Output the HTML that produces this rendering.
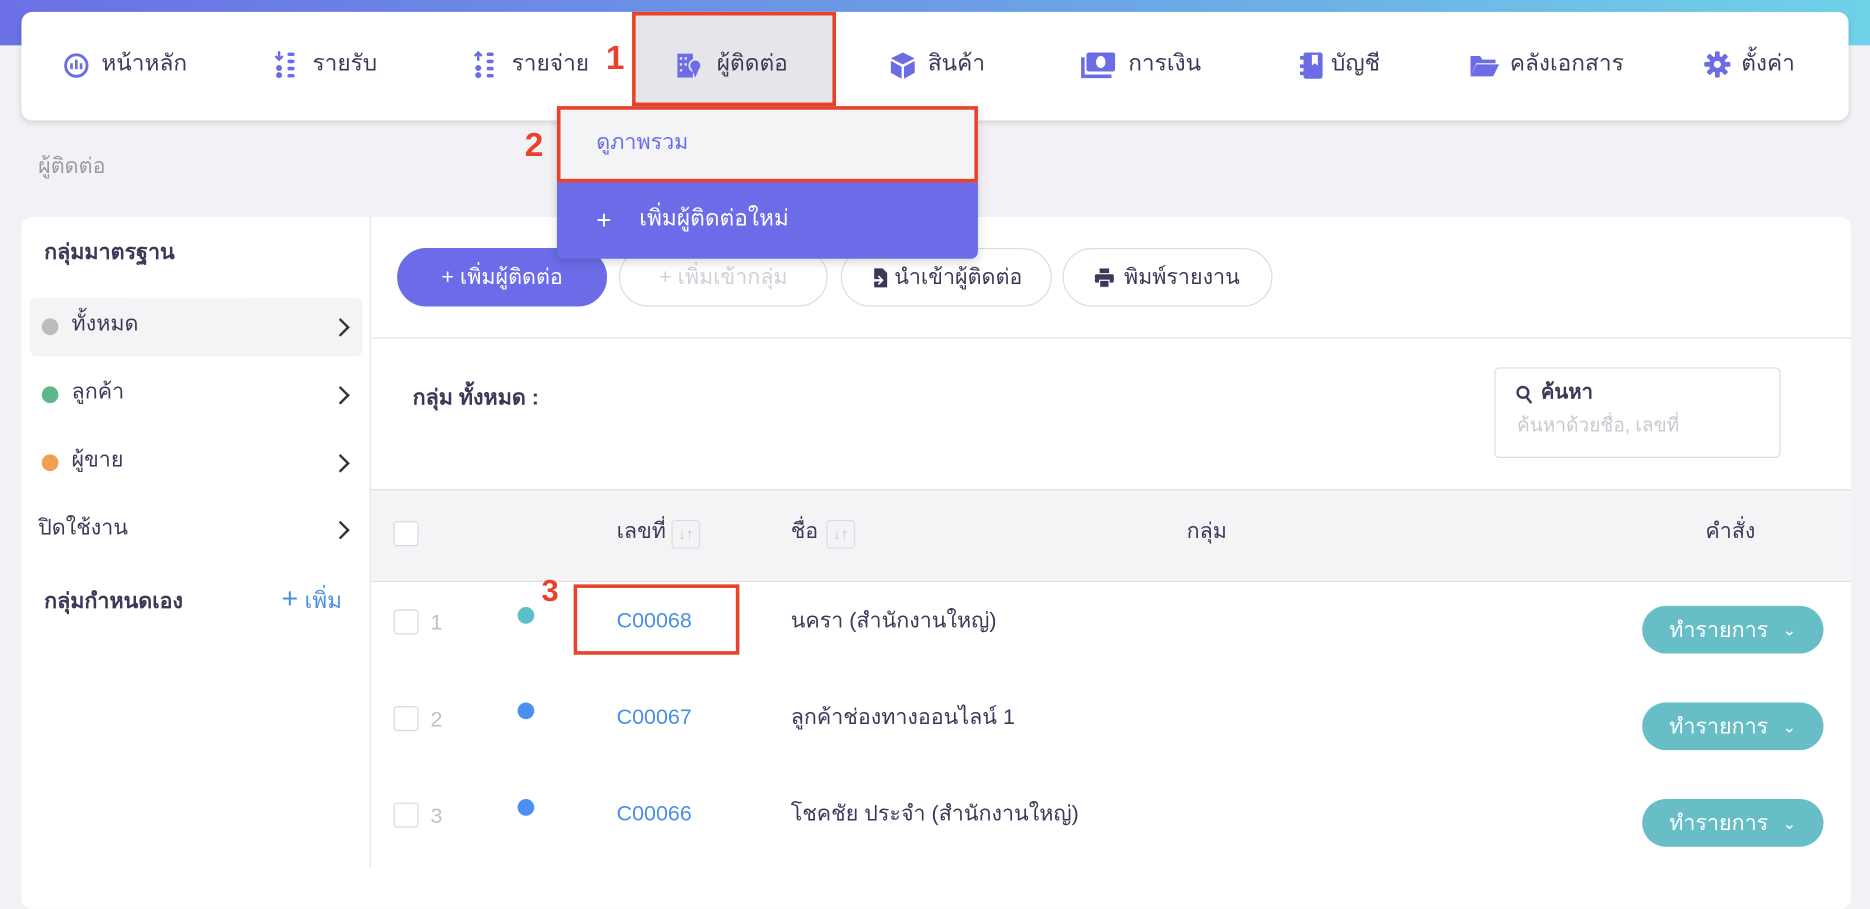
<!DOCTYPE html>
<html><head><meta charset="utf-8">
<style>
*{box-sizing:border-box;margin:0;padding:0}
html,body{width:1870px;height:868px;overflow:hidden;background:#f2f2f6}
#s{position:absolute;left:0;top:0;width:1568px;height:728px;transform:scale(1.19260);transform-origin:0 0;font-family:"Liberation Sans","Noto Sans CJK SC",sans-serif;color:#3a3a58;font-size:18px;line-height:1.05}
.a{position:absolute;white-space:nowrap}
.grad{left:0;top:0;width:1568px;height:38px;background:linear-gradient(90deg,#6b70e6,#6ca6e6 60%,#6fd2e8)}
.nav{left:18px;top:10px;width:1532px;height:91px;background:#fff;border-radius:9px;box-shadow:0 2px 5px rgba(0,0,0,.12)}
.ni{top:44px;font-size:19px;color:#3a3a58}
.ic{position:absolute}
.red{color:#e8432a;font-weight:bold;font-size:28px}
.card{left:18px;top:182px;width:1534px;height:580px;background:#fff;border-radius:9px}
.dot{position:absolute;width:14px;height:14px;border-radius:50%}
.chev{position:absolute;width:11px;height:11px;border-right:2px solid #333;border-top:2px solid #333;transform:rotate(45deg)}
.btn{position:absolute;top:208px;height:49px;border-radius:25px;border:1px solid #dcdce4;font-size:18px;display:flex;align-items:center;justify-content:center;background:#fff}
.cb{position:absolute;width:21px;height:21px;border:1px solid #d8d8e0;border-radius:3px;background:#fff}
.tb{position:absolute;left:1377px;width:152px;height:40px;border-radius:20px;background:#67bec6;color:#fff;font-size:18px;display:flex;align-items:center;justify-content:center;gap:12px}
.srt{position:absolute;width:24px;height:24px;border:1px solid #dcdce4;border-radius:3px;color:#c8c8d0;font-size:13px;text-align:center;line-height:22px;font-weight:bold}
</style></head><body><div id="s">
<div class="a grad"></div>
<div class="a nav"></div>
<div class="a" style="left:530px;top:10px;width:171px;height:79px;background:#e6e6ea;border:3px solid #e8432a"></div>
<svg class="ic" style="left:53px;top:44px" width="22" height="22" viewBox="0 0 22 22"><circle cx="11" cy="11" r="9" fill="none" stroke="#6c6ce6" stroke-width="2.4"/><path d="M7 9v5M11 6v8M15 9v5" stroke="#6c6ce6" stroke-width="2.2"/></svg>
<div class="a ni" style="left:85px">หน้าหลัก</div>
<svg class="ic" style="left:230px;top:42px" width="20" height="24" viewBox="0 0 20 24"><path d="M4 1v7M1 5l3 3 3-3" stroke="#6c6ce6" stroke-width="2" fill="none"/><circle cx="4" cy="15" r="2.5" fill="#6c6ce6"/><circle cx="4" cy="21" r="2.5" fill="#6c6ce6"/><g fill="#6c6ce6"><rect x="11" y="2" width="6" height="3" rx="1.5"/><rect x="11" y="8" width="6" height="3" rx="1.5"/><rect x="11" y="14" width="6" height="3" rx="1.5"/><rect x="11" y="20" width="6" height="3" rx="1.5"/></g></svg>
<div class="a ni" style="left:262px">รายรับ</div>
<svg class="ic" style="left:397px;top:42px" width="20" height="24" viewBox="0 0 20 24"><path d="M4 9V2M1 5l3-3 3 3" stroke="#6c6ce6" stroke-width="2" fill="none"/><circle cx="4" cy="15" r="2.5" fill="#6c6ce6"/><circle cx="4" cy="21" r="2.5" fill="#6c6ce6"/><g fill="#6c6ce6"><rect x="11" y="2" width="6" height="3" rx="1.5"/><rect x="11" y="8" width="6" height="3" rx="1.5"/><rect x="11" y="14" width="6" height="3" rx="1.5"/><rect x="11" y="20" width="6" height="3" rx="1.5"/></g></svg>
<div class="a ni" style="left:429px">รายจ่าย</div>
<div class="a red" style="left:508px;top:34px">1</div>
<svg class="ic" style="left:567px;top:43px" width="22" height="24" viewBox="0 0 22 24"><rect x="1" y="2" width="13" height="20" fill="#6c6ce6"/><g fill="#e6e6ea"><rect x="3" y="5" width="2" height="2"/><rect x="7" y="5" width="2" height="2"/><rect x="3" y="10" width="2" height="2"/><rect x="7" y="10" width="2" height="2"/><rect x="3" y="15" width="2" height="2"/></g><circle cx="16" cy="12" r="5" fill="#6c6ce6" stroke="#e6e6ea" stroke-width="1.5"/><path d="M13 15l3 7 3-7z" fill="#6c6ce6"/></svg>
<div class="a ni" style="left:601px">ผู้ติดต่อ</div>
<svg class="ic" style="left:746px;top:43px" width="22" height="24" viewBox="0 0 22 24"><path d="M11 1l10 5-10 5L1 6z" fill="#6c6ce6"/><path d="M1 8l9 5v10l-9-5zM21 8l-9 5v10l9-5z" fill="#6c6ce6"/></svg>
<div class="a ni" style="left:778px">สินค้า</div>
<svg class="ic" style="left:906px;top:43px" width="30" height="24" viewBox="0 0 30 24"><rect x="5" y="1" width="24" height="16" rx="2" fill="#6c6ce6"/><ellipse cx="17" cy="9" rx="4" ry="5" fill="#fff"/><path d="M2 5v16h24" stroke="#6c6ce6" stroke-width="3" fill="none"/></svg>
<div class="a ni" style="left:946px">การเงิน</div>
<svg class="ic" style="left:1090px;top:43px" width="20" height="24" viewBox="0 0 20 24"><rect x="3" y="1" width="16" height="22" rx="2" fill="#6c6ce6"/><rect x="0" y="4" width="4" height="3" fill="#6c6ce6"/><rect x="0" y="11" width="4" height="3" fill="#6c6ce6"/><rect x="0" y="17" width="4" height="3" fill="#6c6ce6"/><path d="M10 3h5v9l-2.5-2-2.5 2z" fill="#fff"/></svg>
<div class="a ni" style="left:1116px">บัญชี</div>
<svg class="ic" style="left:1232px;top:45px" width="26" height="20" viewBox="0 0 26 20"><path d="M1 2h8l2 3h11v3H6L1 19z" fill="#6c6ce6"/><path d="M6 9h19l-5 10H1z" fill="#6c6ce6"/></svg>
<div class="a ni" style="left:1266px">คลังเอกสาร</div>
<svg class="ic" style="left:1429px;top:43px" width="22" height="22" viewBox="0 0 22 22"><g fill="#6c6ce6"><circle cx="11" cy="11" r="7"/><rect x="9" y="0" width="4" height="22" rx="1"/><rect x="0" y="9" width="22" height="4" rx="1"/><rect x="9" y="0" width="4" height="22" rx="1" transform="rotate(45 11 11)"/><rect x="9" y="0" width="4" height="22" rx="1" transform="rotate(-45 11 11)"/></g><circle cx="11" cy="11" r="3" fill="#fff"/></svg>
<div class="a ni" style="left:1460px">ตั้งค่า</div>

<div class="a" style="left:32px;top:130px;color:#9a9aa6;font-size:18px">ผู้ติดต่อ</div>

<div class="a card"></div>
<div class="a" style="left:310px;top:182px;width:1px;height:546px;background:#e4e4ea"></div>
<div class="a" style="left:37px;top:202px;font-weight:bold;font-size:18px">กลุ่มมาตรฐาน</div>
<div class="a" style="left:25px;top:250px;width:279px;height:49px;background:#f4f4f6;border-radius:6px"></div>
<div class="dot" style="left:35px;top:267px;background:#bcbcbc"></div><div class="a" style="left:60px;top:262px">ทั้งหมด</div><div class="chev" style="left:280px;top:269px"></div>
<div class="dot" style="left:35px;top:324px;background:#5cb88a"></div><div class="a" style="left:60px;top:319px">ลูกค้า</div><div class="chev" style="left:280px;top:326px"></div>
<div class="dot" style="left:35px;top:381px;background:#f0a050"></div><div class="a" style="left:60px;top:376px">ผู้ขาย</div><div class="chev" style="left:280px;top:383px"></div>
<div class="a" style="left:32px;top:433px">ปิดใช้งาน</div><div class="chev" style="left:280px;top:439px"></div>
<div class="a" style="left:37px;top:495px;font-weight:bold">กลุ่มกำหนดเอง</div>
<div class="a" style="left:236px;top:493px;color:#4a90e8;font-size:19px"><span style="font-size:24px;line-height:20px">+</span> เพิ่ม</div>

<div class="btn" style="left:333px;width:176px;background:#6c6ce8;border-color:#6c6ce8;color:#fff">+ เพิ่มผู้ติดต่อ</div>
<div class="btn" style="left:519px;width:175px;color:#d0d0d8">+ เพิ่มเข้ากลุ่ม</div>
<div class="btn" style="left:705px;width:177px;gap:6px"><svg width="14" height="18" viewBox="0 0 14 18"><path d="M3 1h7l4 4v12H3v-5h5l-2 2 1 1 4-4-4-4-1 1 2 2H3z" fill="#3a3a58"/></svg>นำเข้าผู้ติดต่อ</div>
<div class="btn" style="left:891px;width:176px;gap:8px"><svg width="16" height="16" viewBox="0 0 16 16"><rect x="4" y="0" width="8" height="4" fill="#3a3a58"/><rect x="0" y="5" width="16" height="7" rx="1.5" fill="#3a3a58"/><rect x="4" y="10" width="8" height="6" fill="#3a3a58" stroke="#fff" stroke-width="1"/></svg>พิมพ์รายงาน</div>
<div class="a" style="left:311px;top:283px;width:1241px;height:1px;background:#e4e4ea"></div>

<div class="a" style="left:346px;top:324px;font-weight:bold">กลุ่ม ทั้งหมด :</div>
<div class="a" style="left:1253px;top:308px;width:240px;height:76px;border:1px solid #dcdce4;border-radius:4px"></div>
<svg class="ic" style="left:1271px;top:323px" width="14" height="16" viewBox="0 0 14 16"><circle cx="6" cy="6" r="4.5" fill="none" stroke="#3a3a58" stroke-width="2"/><path d="M9 10l4 5" stroke="#3a3a58" stroke-width="2"/></svg>
<div class="a" style="left:1292px;top:320px;font-weight:bold;font-size:17px">ค้นหา</div>
<div class="a" style="left:1272px;top:350px;font-size:16px;color:#c8c8d0">ค้นหาด้วยชื่อ, เลขที่</div>

<div class="a" style="left:311px;top:410px;width:1241px;height:78px;background:#f4f4f6;border-top:1px solid #e0e0e6;border-bottom:1px solid #e0e0e6"></div>
<div class="cb" style="left:330px;top:437px"></div>
<div class="a" style="left:517px;top:436px">เลขที่</div><div class="srt" style="left:563px;top:436px">↓↑</div>
<div class="a" style="left:663px;top:436px">ชื่อ</div><div class="srt" style="left:693px;top:436px">↓↑</div>
<div class="a" style="left:995px;top:436px">กลุ่ม</div>
<div class="a" style="left:1430px;top:436px">คำสั่ง</div>

<div class="cb" style="left:330px;top:511px"></div><div class="a" style="left:361px;top:513px;color:#c0c0c8">1</div>
<div class="dot" style="left:434px;top:509px;background:#5cc0c8"></div>
<div class="a" style="left:517px;top:511px;color:#4a8ee6">C00068</div>
<div class="a" style="left:663px;top:511px">นครา (สำนักงานใหญ่)</div>
<div class="tb" style="top:508px">ทำรายการ <span style="font-size:14px">⌄</span></div>

<div class="cb" style="left:330px;top:592px"></div><div class="a" style="left:361px;top:594px;color:#c0c0c8">2</div>
<div class="dot" style="left:434px;top:589px;background:#4a90f0"></div>
<div class="a" style="left:517px;top:592px;color:#4a8ee6">C00067</div>
<div class="a" style="left:663px;top:592px">ลูกค้าช่องทางออนไลน์ 1</div>
<div class="tb" style="top:589px">ทำรายการ <span style="font-size:14px">⌄</span></div>

<div class="cb" style="left:330px;top:673px"></div><div class="a" style="left:361px;top:675px;color:#c0c0c8">3</div>
<div class="dot" style="left:434px;top:670px;background:#4a90f0"></div>
<div class="a" style="left:517px;top:673px;color:#4a8ee6">C00066</div>
<div class="a" style="left:663px;top:673px">โชคชัย ประจำ (สำนักงานใหญ่)</div>
<div class="tb" style="top:670px">ทำรายการ <span style="font-size:14px">⌄</span></div>

<div class="a" style="left:481px;top:490px;width:139px;height:59px;border:3px solid #e8432a"></div>
<div class="a red" style="left:454px;top:482px;font-size:26px">3</div>

<div class="a" style="left:467px;top:89px;width:353px;height:128px;background:#6c6ce8;border-radius:0 0 6px 6px;box-shadow:0 3px 8px rgba(0,0,0,.15)"></div>
<div class="a" style="left:467px;top:89px;width:353px;height:64px;background:#f4f4f6;border:3px solid #e8432a"></div>
<div class="a" style="left:500px;top:110px;color:#6c6ce6;font-size:18px">ดูภาพรวม</div>
<div class="a" style="left:500px;top:173px;color:#fff;font-size:22px">+</div>
<div class="a" style="left:536px;top:174px;color:#fff;font-size:19px">เพิ่มผู้ติดต่อใหม่</div>
<div class="a red" style="left:440px;top:107px">2</div>
</div></body></html>
